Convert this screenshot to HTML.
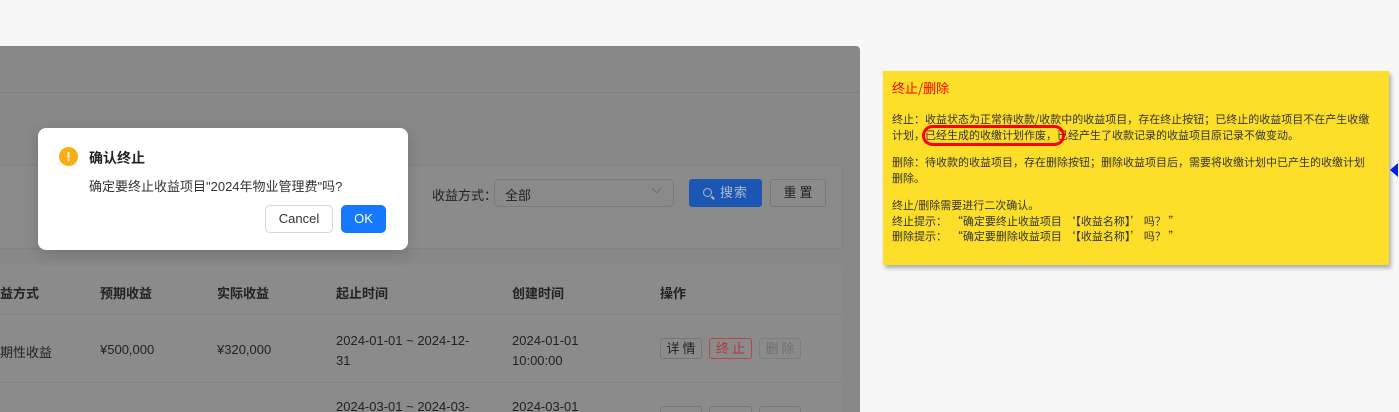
<!DOCTYPE html>
<html style="overflow:hidden"><head><meta charset="utf-8"><style>
*{margin:0;padding:0;box-sizing:border-box}
html,body{width:1399px;height:412px;overflow:hidden}
body{background:#f7f7f7;position:relative;font-family:"Liberation Sans","Noto Sans CJK SC",sans-serif;}
.a{position:absolute}
.main{left:0;top:46px;width:860px;height:366px;background:#888;border-top-right-radius:4px}
.t{font-size:13px;color:#222;white-space:nowrap}
.th{font-size:13px;font-weight:bold;color:#222;white-space:nowrap}
.btn{position:absolute;border:1px solid #777;border-radius:3px;font-size:13px;text-align:center;letter-spacing:3px;text-indent:3px}
.note{left:883px;top:71px;width:506px;height:194px;background:#fddf2a;box-shadow:2px 3px 4px rgba(0,0,0,.3);font-family:"Noto Sans CJK SC",sans-serif;font-size:11px;color:#333;line-height:15.5px;padding:0 9px;white-space:pre}
</style></head><body>
<div class="a main"></div>
<div class="a" style="left:0;top:92px;width:860px;height:1px;background:#7e7e7e"></div>
<div class="a" style="left:0;top:165px;width:843px;height:84px;background:#8b8b8b;border:1px solid #828282;border-left:none;border-radius:0 6px 6px 0"></div>
<div class="a t" style="left:432px;top:185px">收益方式：</div>
<div class="a" style="left:494px;top:179px;width:180px;height:28px;border:1px solid #7b7b7b;border-radius:4px;background:#8a8a8a"></div>
<div class="a t" style="left:505px;top:185px">全部</div>
<div class="a" style="left:653px;top:185px;width:7px;height:7px;border-right:1px solid #6e6e6e;border-bottom:1px solid #6e6e6e;transform:rotate(45deg)"></div>
<div class="btn" style="left:689px;top:179px;width:73px;height:28px;background:#1b57b2;border-color:#1b57b2;color:#aab8d0;line-height:26px;letter-spacing:1px;padding-left:14px">搜索</div>
<div class="a" style="left:703px;top:188px;width:9px;height:9px;border:1.5px solid #aab8d0;border-radius:50%"></div>
<div class="a" style="left:711px;top:197px;width:4px;height:1.5px;background:#aab8d0;transform:rotate(45deg)"></div>
<div class="btn" style="left:770px;top:179px;width:56px;height:28px;background:#8b8b8b;line-height:26px;color:#222">重置</div>
<div class="a" style="left:0;top:265px;width:843px;height:148px;background:#8b8b8b"></div>
<div class="a" style="left:0;top:314px;width:843px;height:1px;background:#838383"></div>
<div class="a" style="left:0;top:382px;width:843px;height:1px;background:#838383"></div>
<div class="a th" style="left:0;top:283px">益方式</div>
<div class="a th" style="left:100px;top:283px">预期收益</div>
<div class="a th" style="left:217px;top:283px">实际收益</div>
<div class="a th" style="left:336px;top:283px">起止时间</div>
<div class="a th" style="left:512px;top:283px">创建时间</div>
<div class="a th" style="left:660px;top:283px">操作</div>
<div class="a t" style="left:0;top:342px">期性收益</div>
<div class="a t" style="left:100px;top:342px">¥500,000</div>
<div class="a t" style="left:217px;top:342px">¥320,000</div>
<div class="a t" style="left:336px;top:331px;line-height:20px">2024-01-01 ~ 2024-12-<br>31</div>
<div class="a t" style="left:512px;top:331px;line-height:20px">2024-01-01<br>10:00:00</div>
<div class="btn" style="left:660px;top:338px;width:42px;height:21px;line-height:19px;color:#222">详情</div>
<div class="btn" style="left:709px;top:338px;width:43px;height:21px;line-height:19px;color:#b33;border-color:#b44">终止</div>
<div class="btn" style="left:759px;top:338px;width:42px;height:21px;line-height:19px;color:#6f6f6f;border-color:#7d7d7d">删除</div>
<div class="a t" style="left:336px;top:399px">2024-03-01 ~ 2024-03-</div>
<div class="a t" style="left:512px;top:399px">2024-03-01</div>
<div class="btn" style="left:660px;top:406px;width:42px;height:21px"></div>
<div class="btn" style="left:709px;top:406px;width:43px;height:21px"></div>
<div class="btn" style="left:759px;top:406px;width:42px;height:21px"></div>
<!-- dialog -->
<div class="a" style="left:38px;top:128px;width:370px;height:122px;background:#fff;border-radius:8px;box-shadow:0 4px 14px rgba(0,0,0,.15)"></div>
<div class="a" style="left:59px;top:147px;width:19px;height:19px;border-radius:50%;background:#faad14;color:#fff;font-size:13px;font-weight:bold;text-align:center;line-height:19px">!</div>
<div class="a" style="left:89px;top:148px;font-size:14px;font-weight:bold;color:#222">确认终止</div>
<div class="a" style="left:89px;top:176px;font-size:13px;color:#333">确定要终止收益项目"2024年物业管理费"吗?</div>
<div class="a" style="left:265px;top:205px;width:68px;height:28px;border:1px solid #d9d9d9;border-radius:5px;font-size:13px;text-align:center;line-height:26px;color:#333">Cancel</div>
<div class="a" style="left:341px;top:205px;width:45px;height:28px;background:#1677ff;border-radius:5px;font-size:13px;text-align:center;line-height:28px;color:#fff">OK</div>
<!-- note -->
<div class="a note"><div style="color:#f00;font-size:13px;margin-top:9px;line-height:16px">终止/删除</div><div style="margin-top:16px">终止：收益状态为正常待收款/收款中的收益项目，存在终止按钮；已终止的收益项目不在产生收缴
计划，已经生成的收缴计划作废，已经产生了收款记录的收益项目原记录不做变动。</div><div style="margin-top:12px">删除：待收款的收益项目，存在删除按钮；删除收益项目后，需要将收缴计划中已产生的收缴计划
删除。</div><div style="margin-top:12px">终止/删除需要进行二次确认。
终止提示：  “确定要终止收益项目 ‘【收益名称】’ 吗？ ”
删除提示：  “确定要删除收益项目 ‘【收益名称】’ 吗？ ”</div></div>
<div class="a" style="left:922px;top:125px;width:143px;height:21px;border:3px solid #f00;border-radius:11px"></div>
<div class="a" style="left:1390px;top:163px;width:0;height:0;border-top:7px solid transparent;border-bottom:7px solid transparent;border-right:8px solid #0020e0"></div>
</body></html>
